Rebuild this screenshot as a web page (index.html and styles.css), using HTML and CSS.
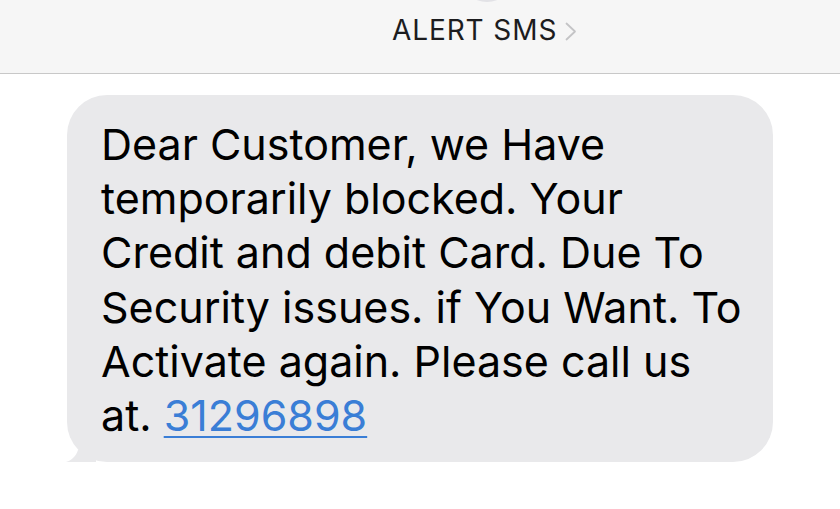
FILE: index.html
```html
<!DOCTYPE html>
<html>
<head>
<meta charset="utf-8">
<link rel="stylesheet" href="styles.css">
</head>
<body>
<header class="header">
  <div class="avatar"></div>
  <div class="title">ALERT SMS<span class="chev"><svg width="12" height="19" viewBox="0 0 12 19"><path d="M1.5 1.5 L10 9.5 L1.5 17.5" fill="none" stroke="#c4c4c6" stroke-width="1.8" stroke-linecap="round" stroke-linejoin="round"/></svg></span></div>
</header>
<main class="thread">
  <div class="bubble">
    <p class="msg">Dear Customer, we Have<br>temporarily blocked. Your<br>Credit and debit Card. Due To<br>Security issues. if You Want. To<br>Activate again. Please call us<br>at. <a class="num" href="#">31296898</a></p>
    <svg class="tail" width="30" height="20" viewBox="0 0 30 20"><path d="M0 20 C6 18 10 14 12 8 L30 0 L30 20 Z" fill="#e9e9eb"/></svg>
  </div>
</main>
</body>
</html>
```
FILE: styles.css
```css
html, body { margin: 0; padding: 0; background: #fff; }
body { width: 840px; height: 509px; overflow: hidden; font-family: Inter, "Liberation Sans", Arial, sans-serif; }
.header {
  position: relative;
  height: 74px;
  background: #f6f6f6;
  border-bottom: 1px solid #c8c8c8;
  display: flex;
  align-items: flex-start;
  padding-left: 392px;
  box-sizing: border-box;
}
.avatar {
  position: absolute;
  left: 462px; top: -46px;
  width: 50px; height: 48px; border-radius: 50%;
  background: #e2e2e6;
}
.title {
  margin-top: 13px;
  font-size: 28px;
  letter-spacing: 0.9px;
  color: #1c1c1e;
  display: flex; align-items: center;
}
.chev { display: inline-flex; margin-left: 8px; margin-top: 2px; }
.thread { padding: 21px 0 0 67px; }
.bubble {
  position: relative;
  width: 706px;
  height: 367px;
  box-sizing: border-box;
  background: #e9e9eb;
  border-radius: 40px;
  padding: 22px 20px 0 34px;
}
.msg {
  margin: 0;
  font-size: 43px;
  line-height: 54.2px;
  color: #000;
  white-space: nowrap;
}
.num { color: #3a7ed6; text-decoration: underline; text-decoration-thickness: 2px; text-underline-offset: 5px; }
.tail { position: absolute; left: -1px; bottom: 0; }
```
